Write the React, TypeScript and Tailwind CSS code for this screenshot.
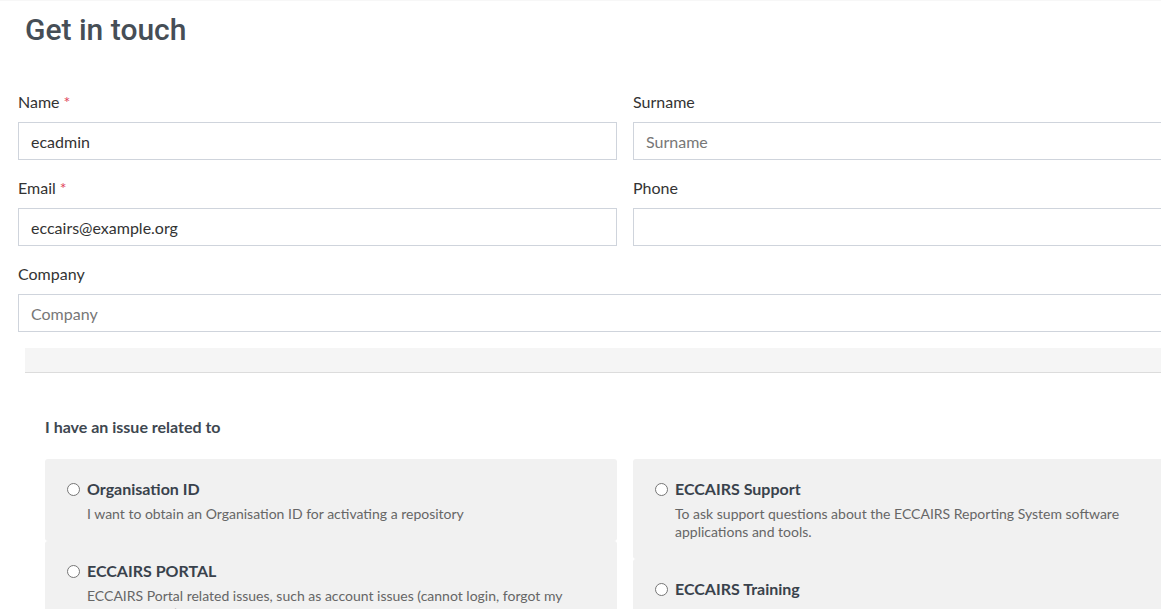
import type { ReactNode } from 'react';

interface FieldProps {
  label: string;
  required?: boolean;
  value?: string;
  placeholder?: string;
}

interface IssueOption {
  title: string;
  description: string;
}

const leftIssues: IssueOption[] = [
  {
    title: 'Organisation ID',
    description: 'I want to obtain an Organisation ID for activating a repository',
  },
  {
    title: 'ECCAIRS PORTAL',
    description:
      'ECCAIRS Portal related issues, such as account issues (cannot login, forgot my password, etc.)',
  },
];

const rightIssues: IssueOption[] = [
  {
    title: 'ECCAIRS Support',
    description:
      'To ask support questions about the ECCAIRS Reporting System software applications and tools.',
  },
  {
    title: 'ECCAIRS Training',
    description: 'To ask questions about ECCAIRS training sessions and materials.',
  },
];

function Field({ label, required = false, value = '', placeholder = '' }: FieldProps) {
  return (
    <div className="flex flex-col">
      <label className="h-5 leading-5 text-[16px] text-[#333]">
        {label}
        {required && <span className="ml-1 text-[#e0435a]">*</span>}
      </label>
      <input
        readOnly
        value={value}
        placeholder={placeholder}
        className="mt-[10px] h-[38px] w-full border border-[#cfd4dc] bg-white px-3 text-[16px] text-[#333] outline-none placeholder:text-[#777]"
      />
    </div>
  );
}

function IssueCard({ title, description }: IssueOption) {
  return (
    <div className="rounded-[3px] bg-[#f1f1f1] pt-[19px] pb-[18px] pl-[22px] pr-[22px]">
      <div className="flex items-center h-[22px]">
        <span className="mr-[7px] h-[13px] w-[13px] shrink-0 rounded-full border border-[#767676] bg-white" />
        <span className="text-[16px] font-bold text-[#39424c]">{title}</span>
      </div>
      <p className="mt-[5px] pl-[20px] text-[14px] leading-[18px] text-[#666]">{description}</p>
    </div>
  );
}

function Column({ children }: { children: ReactNode }) {
  return <div className="flex flex-col gap-0">{children}</div>;
}

export default function App() {
  return (
    <div
      className="h-[609px] w-[1161px] overflow-hidden border-t border-[#f7f7f7] bg-white"
      style={{ fontFamily: 'Lato, "Noto Sans", sans-serif' }}
    >
      <div className="w-[1250px]">
        <h1
          className="ml-[25px] mt-[10px] text-[30px] font-medium leading-[38px] text-[#464e56]"
          style={{ fontFamily: 'Roboto, "Liberation Sans", sans-serif' }}
        >
          Get in touch
        </h1>

        <div className="mt-[43px] px-[18px]">
          <div className="grid grid-cols-2 gap-x-4 gap-y-[18px]">
            <Field label="Name" required value="ecadmin" />
            <Field label="Surname" placeholder="Surname" />
            <Field label="Email" required value="eccairs@example.org" />
            <Field label="Phone" />
            <div className="col-span-2">
              <Field label="Company" placeholder="Company" />
            </div>
          </div>

          <div className="ml-[7px] mt-4 h-[25px] border-b border-[#dcdcdc] bg-[#f5f5f5]" />

          <div className="pl-[27px]">
            <h2 className="mt-[44px] text-[16px] font-bold leading-5 text-[#3e4750]">
              I have an issue related to
            </h2>
            <div className="mt-[22px] grid grid-cols-[572px_572px] gap-x-4">
              <Column>
                {leftIssues.map((issue) => (
                  <IssueCard key={issue.title} {...issue} />
                ))}
              </Column>
              <Column>
                {rightIssues.map((issue) => (
                  <IssueCard key={issue.title} {...issue} />
                ))}
              </Column>
            </div>
          </div>
        </div>
      </div>
    </div>
  );
}
